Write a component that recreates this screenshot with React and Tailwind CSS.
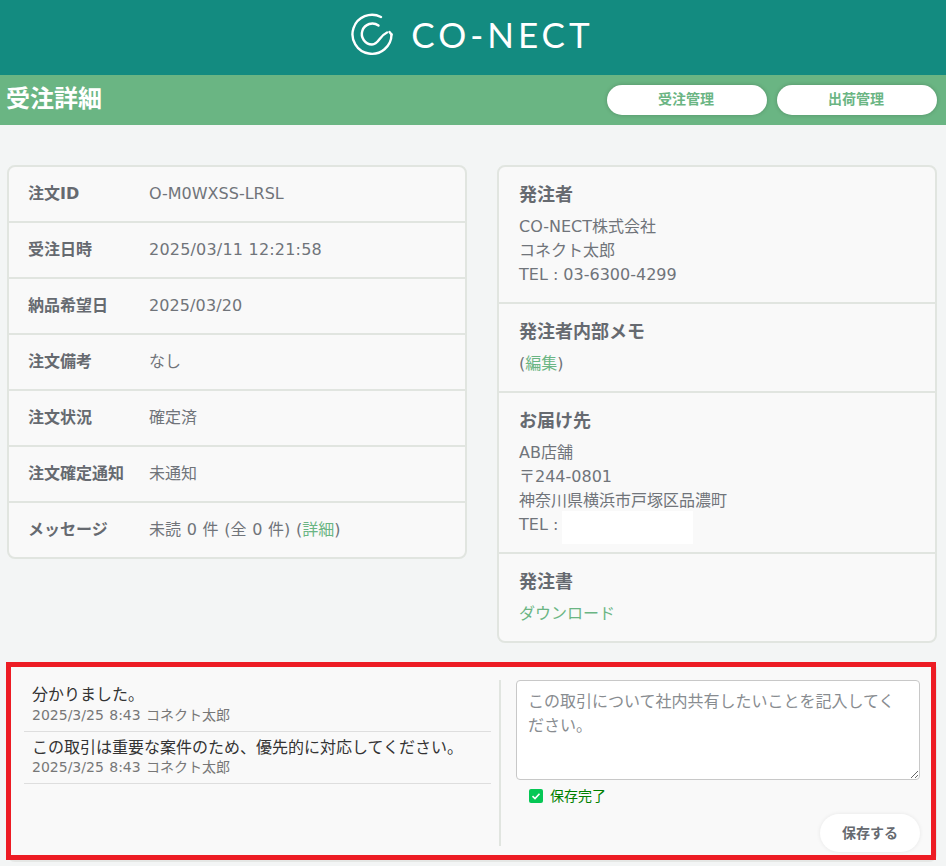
const font = { fontFamily: '"DejaVu Sans", "Noto Sans CJK JP", sans-serif' };

function Row({ label, children, last }) {
  return (
    <div className={`flex items-center pl-[19px] ${last ? "h-[54px]" : "h-[56px] border-b-2 border-[#e1e5e0]"}`}>
      <div className="w-[121px] font-bold text-[#666a70]">{label}</div>
      <div className="text-[#70747a]">{children}</div>
    </div>
  );
}

function Section({ title, children, last }) {
  return (
    <div className={`px-5 pt-[16px] pb-[15px] ${last ? "" : "border-b-2 border-[#e1e5e0]"}`}>
      <div className="font-bold text-[18px] text-[#666a70] leading-6 mb-2">{title}</div>
      <div className="text-[#70747a] leading-6">{children}</div>
    </div>
  );
}

function Logo() {
  return (
    <svg width="44" height="44" viewBox="0 0 44 44" fill="none" stroke="white" strokeWidth="2.4" strokeLinecap="round">
      <path d="M31 4 A19.5 19.5 0 1 0 41.5 21.5" />
      <path d="M41.5 21.5 L39.5 19" />
      <path d="M28.5 12.5 A10.5 10.5 0 1 0 22 31.5 C29 31.5 29 23 37 19.5" />
    </svg>
  );
}

export default function App() {
  return (
    <div style={font} className="relative w-[946px] h-[866px] overflow-hidden bg-[#f3f5f5] text-[16px]">
      <header className="h-[75px] bg-[#138b80] flex items-center justify-center gap-[17px] pb-[6px] pt-[1px] pr-[2px]">
        <Logo />
        <span style={{ fontFamily: "Lato, sans-serif" }} className="text-white text-[35px] font-normal tracking-[4px] leading-none -mt-[2px]">CO-NECT</span>
      </header>

      <div className="h-[50px] bg-[#6ab583] flex items-center justify-between pl-[6px] pr-[9px]">
        <h1 className="text-white font-bold text-[24px] leading-none -mt-[3px]">受注詳細</h1>
        <div className="flex gap-[10px] -mt-[1px]">
          <button className="w-[160px] h-[30px] pr-[2px] rounded-full bg-white text-[#6ab583] text-[14px] font-bold shadow-[0_0_4px_rgba(0,0,0,0.2)]">受注管理</button>
          <button className="w-[160px] h-[30px] pr-[2px] rounded-full bg-white text-[#6ab583] text-[14px] font-bold shadow-[0_0_4px_rgba(0,0,0,0.2)]">出荷管理</button>
        </div>
      </div>

      <div className="flex items-start gap-[30px] pl-[7px] pt-[40px]">
        <div className="w-[460px] border-2 border-[#e1e5e0] rounded-lg bg-[#f9f9f9]">
          <Row label="注文ID">O-M0WXSS-LRSL</Row>
          <Row label="受注日時"><span className="tracking-[0.2px]">2025/03/11 12:21:58</span></Row>
          <Row label="納品希望日"><span className="tracking-[0.1px]">2025/03/20</span></Row>
          <Row label="注文備考">なし</Row>
          <Row label="注文状況">確定済</Row>
          <Row label="注文確定通知">未通知</Row>
          <Row label="メッセージ" last>
            <span className="[word-spacing:0.6px]">未読 0 件 (全 0 件) (<span className="text-[#6ab583]">詳細</span>)</span>
          </Row>
        </div>

        <div className="w-[440px] border-2 border-[#e1e5e0] rounded-lg bg-[#f9f9f9]">
          <Section title="発注者">
            <div>CO-NECT株式会社</div>
            <div>コネクト太郎</div>
            <div>TEL : 03-6300-4299</div>
          </Section>
          <Section title="発注者内部メモ">
            (<span className="text-[#6ab583]">編集</span>)
          </Section>
          <Section title="お届け先">
            <div>AB店舗</div>
            <div>〒244-0801</div>
            <div>神奈川県横浜市戸塚区品濃町</div>
            <div className="flex h-6">
              <span>TEL :</span>
              <span className="ml-[4px] w-[131px] h-[33px] -mt-[2px] bg-white" />
            </div>
          </Section>
          <Section title="発注書" last>
            <span className="text-[#6ab583]">ダウンロード</span>
          </Section>
        </div>
      </div>

      <div className="ml-[7px] mt-[19px] w-[930px] h-[200px] border-2 border-[#e5e7e5] rounded-lg bg-[#f9f9f9] flex pt-[16px] pl-[15px] pr-[15px]">
        <div className="w-[467px] h-[167px] shrink-0">
          <div className="h-[52px] pt-[3px] border-b border-[#dedede] pl-2">
            <div className="text-[#333] leading-6">分かりました。</div>
            <div className="text-[#777] text-[14px] leading-5 -mt-[2px] [word-spacing:1px]">2025/3/25 8:43 コネクト太郎</div>
          </div>
          <div className="h-[52px] pt-[4px] border-b border-[#dedede] pl-2">
            <div className="text-[#333] leading-6">この取引は重要な案件のため、優先的に対応してください。</div>
            <div className="text-[#777] text-[14px] leading-5 -mt-[3px] [word-spacing:1px]">2025/3/25 8:43 コネクト太郎</div>
          </div>
        </div>
        <div className="ml-[8px] w-[2px] h-[166px] bg-[#e1e5e0] shrink-0" />
        <div className="ml-[15px] w-[404px]">
          <textarea
            style={font}
            className="block w-[404px] h-[100px] bg-white border border-[#c8c8c8] rounded-[4px] px-[11px] py-[9px] text-[16px] leading-6 placeholder:text-[#888c90] outline-none"
            placeholder="この取引について社内共有したいことを記入してください。"
          />
          <div className="flex items-center h-[18px] mt-[7px] ml-[13px]">
            <svg width="14" height="14" viewBox="0 0 14 14">
              <rect width="14" height="14" rx="2" fill="#06c755" />
              <path d="M3.5 7.2 L6 9.6 L10.5 4.8" fill="none" stroke="white" strokeWidth="1.6" />
            </svg>
            <span className="ml-[7px] text-[14px] text-[#008000]">保存完了</span>
          </div>
          <div className="flex justify-end mt-[9px]">
            <button className="w-[100px] h-[38px] rounded-full bg-white text-[14px] font-bold text-[#666a70] shadow-[0_0_4px_rgba(0,0,0,0.08)]">保存する</button>
          </div>
        </div>
      </div>

      <div className="absolute left-[6px] top-[662px] w-[930px] h-[198px] border-[5px] border-[#ed1c24] pointer-events-none" />
    </div>
  );
}
